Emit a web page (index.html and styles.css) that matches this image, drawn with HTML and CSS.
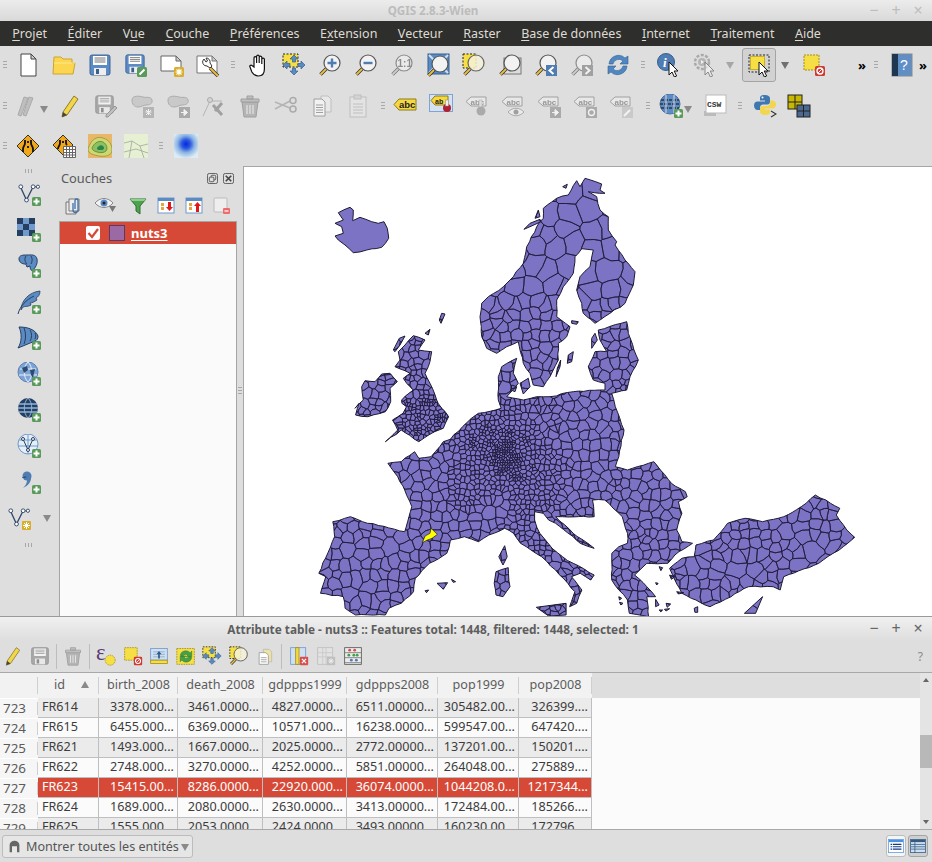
FILE: index.html
```html
<!DOCTYPE html>
<html lang="fr">
<head>
    <meta charset="UTF-8">
    <title>QGIS 2.8.3-Wien</title>
    <link rel="stylesheet" href="styles.css">
</head>
<body>
<svg class="defs" width="0" height="0">
    <defs>
        <radialGradient id="heatg" cx=".5" cy=".42" r=".6"><stop offset="0" stop-color="#0628e0"/><stop offset=".3" stop-color="#2a58e0"/><stop offset=".6" stop-color="#8cb4e4"/><stop offset="1" stop-color="#dcecf4"/></radialGradient>
        <g id="plusb"><rect x="15" y="15" width="9" height="9" rx="1.5" fill="#5a9a5a"/><path d="M19.5 16.500v6M16.500 19.500h6" stroke="#fff" stroke-width="2"/></g>
        <g id="mag"><path d="M8 16 2.500 21.500" stroke="#333" stroke-width="3.4"/><path d="M8 16 2.500 21.500" stroke="#eec040" stroke-width="1.8"/><circle cx="14" cy="10" r="8" fill="#f2f2f2" stroke="#555" stroke-width="1.2"/></g>
        <g id="tag"><path d="M6 3h15v9H6L1 7.5z" fill="#eee" stroke="#777"/><text x="5.5" y="10.5" font-size="8" font-weight="700" font-family="Liberation Sans" fill="#666">abc</text></g>
        <g id="arrow"><path d="M0 0v13l3-3 2.4 5 2.2-1-2.4-5H9z" fill="#fff" stroke="#111" stroke-width="1"/></g>
        <g id="v"><path d="M4 6l6 13L17 5" fill="none" stroke="#30486a" stroke-width="1.4"/><path d="M17 5h5" stroke="#30486a"/><circle cx="4" cy="5" r="2" fill="#fff" stroke="#30486a"/><circle cx="10" cy="19" r="2" fill="#fff" stroke="#30486a"/><circle cx="17" cy="5" r="2" fill="#fff" stroke="#30486a"/><circle cx="22" cy="5" r="1.7" fill="#fff" stroke="#30486a"/></g>
        <g id="globe"><circle cx="11" cy="10" r="10" fill="#7da4d4" stroke="#5a82b8"/><path d="M3 7h16M2 13h18M11 0c-5 5-5 15 0 20M11 0c5 5 5 15 0 20" stroke="#e8f0fa" fill="none"/><path d="M5 6l5-2 1 4-4 3zM13 8l5-1-1 4-1 5-2-3z" fill="#2d4a70"/></g>

        <symbol id="new" viewBox="0 0 24 24"><path d="M5 1h10l5 5v17H5z" fill="#fff" stroke="#444"/><path d="M15 1v5h5z" fill="#ccc" stroke="#444"/></symbol>
        <symbol id="open" viewBox="0 0 24 24"><path d="M1 21 2 4h7l2 2h9v4h3l-2 11z" fill="#fbd64e" stroke="#c9a431"/><path d="M2 10h21" stroke="#ffe98c"/></symbol>
        <symbol id="save" viewBox="0 0 24 24"><rect x="2" y="2" width="20" height="20" rx="2" fill="#5b8bc2" stroke="#3d6699"/><rect x="5" y="3" width="14" height="9" fill="#fff"/><path d="M6.5 5h11M6.5 7h11M6.500 9h11" stroke="#777"/><rect x="6" y="15" width="12" height="7" fill="#eee"/><rect x="8" y="16" width="3" height="5" fill="#3d5f8c"/></symbol>
        <symbol id="saveas" viewBox="0 0 24 24"><use href="#save" width="22" height="22"/><rect x="13" y="14" width="10" height="10" rx="1.5" fill="#5a9a5a"/><path d="M15.5 21.5l5-5" stroke="#fff" stroke-width="2"/></symbol>
        <symbol id="newprint" viewBox="0 0 24 24"><path d="M1 3h15l5 5v10H1z" fill="#fff" stroke="#666"/><path d="M16 3v5h5z" fill="#ccc" stroke="#666"/><rect x="14" y="14" width="10" height="10" rx="1.5" fill="#d9ae2a"/><path d="M19 15.5v7M15.5 19h7M16.5 16.5l5 5M21.5 16.5l-5 5" stroke="#fff" stroke-width="1.1"/></symbol>
        <symbol id="manager" viewBox="0 0 24 24"><path d="M1 3h15l5 5v12H1z" fill="#fff" stroke="#777"/><path d="M16 3v5h5z" fill="#ccc" stroke="#777"/><path d="M14 15l8 8" stroke="#333" stroke-width="3.4"/><path d="M14 15l8 8" stroke="#eec040" stroke-width="1.8"/><path d="M8 6a4 4 0 0 0 3 7l3 2 2-2-2-3a4 4 0 0 0-4-5l1.5 3-1.5 1z" fill="#fff" stroke="#333"/></symbol>
        <symbol id="pan" viewBox="0 0 24 24"><path d="M8 12V5a1.3 1.3 0 0 1 2.6 0v5-6.500a1.3 1.3 0 0 1 2.6 0V10 4.500a1.3 1.3 0 0 1 2.6 0V11 6.500a1.3 1.3 0 0 1 2.6 0V16c0 4-2 7-6 7s-5-2-6.500-4L4 14c-.8-1.2.8-2.500 2-1.500L8 14z" fill="#fff" stroke="#111" stroke-width="1.2"/></symbol>
        <symbol id="pansel" viewBox="0 0 24 24"><rect x="1" y="1" width="15" height="13" fill="#f5df45" stroke="#222" stroke-dasharray="2 1.5"/><path d="M12 2l4 4h-2.500v3h-3V6H8zM12 22l-4-4h2.500v-3h3v3H16zM1 12l4-4v2.500h3v3H5V16zM23 12l-4 4v-2.500h-3v-3h3V8z" fill="#5b8bc2" stroke="#35608f" stroke-width=".7"/></symbol>
        <symbol id="zin" viewBox="0 0 24 24"><use href="#mag"/><path d="M14 5.5v9M9.500 10h9" stroke="#4f7db3" stroke-width="2.4"/></symbol>
        <symbol id="zout" viewBox="0 0 24 24"><use href="#mag"/><path d="M9.500 10h9" stroke="#4f7db3" stroke-width="2.4"/></symbol>
        <symbol id="z11" viewBox="0 0 24 24"><use href="#mag"/><text x="7.5" y="13.500" font-size="10" font-weight="700" font-family="Liberation Sans" fill="#555">1:1</text></symbol>
        <symbol id="zfull" viewBox="0 0 24 24"><rect x="2" y="1" width="21" height="20" fill="#5b8bc2" stroke="#35608f"/><path d="M3 2l6 6M22 2l-6 6M3 20l6-6M22 20l-6-6" stroke="#cfe0f2" stroke-width="2"/><use href="#mag" transform="translate(0 1)"/></symbol>
        <symbol id="zsel" viewBox="0 0 24 24"><rect x="1" y="1" width="13" height="14" fill="#f5df45" stroke="#222" stroke-dasharray="2 1.5"/><path d="M8 16 2.500 21.500" stroke="#333" stroke-width="3.4"/><path d="M8 16 2.500 21.500" stroke="#eec040" stroke-width="1.8"/><circle cx="14" cy="10" r="8" fill="#f4f2d8" fill-opacity=".85" stroke="#666" stroke-width="1.2"/></symbol>
        <symbol id="zlast" viewBox="0 0 24 24"><rect x="6" y="5" width="17" height="16" fill="#ddd" stroke="#777"/><use href="#mag"/></symbol>
        <symbol id="zprev" viewBox="0 0 24 24"><use href="#mag"/><rect x="12" y="12" width="11" height="11" fill="#4f7db3"/><path d="M19.5 14l-4 3.500 4 3.500" fill="none" stroke="#fff" stroke-width="2"/></symbol>
        <symbol id="znext" viewBox="0 0 24 24"><use href="#mag"/><rect x="12" y="12" width="11" height="11" fill="#4f7db3"/><path d="M15.5 14l4 3.500-4 3.500" fill="none" stroke="#fff" stroke-width="2"/></symbol>
        <symbol id="refresh" viewBox="0 0 24 24"><path d="M3 11A9.500 9.500 0 0 1 19 5l3-2v8h-8l3-3a6 6 0 0 0-10 3z" fill="#4f87c2" stroke="#35608f" stroke-width=".6"/><path d="M21 13A9.500 9.500 0 0 1 5 19l-3 2v-8h8l-3 3a6 6 0 0 0 10-3z" fill="#4f87c2" stroke="#35608f" stroke-width=".6"/></symbol>
        <symbol id="identify" viewBox="0 0 24 24"><circle cx="10" cy="9" r="8.5" fill="#4f7db3" stroke="#35608f"/><text x="7" y="14" font-size="13" font-weight="700" font-style="italic" font-family="Liberation Serif" fill="#fff">i</text><use href="#arrow" transform="translate(13 9)"/></symbol>
        <symbol id="action" viewBox="0 0 24 24"><circle cx="10" cy="9" r="7" fill="#ddd" stroke="#888" stroke-width="2.5" stroke-dasharray="3 1.5"/><circle cx="10" cy="9" r="4" fill="#999"/><path d="M9 7l3 2-3 2z" fill="#fff"/><use href="#arrow" transform="translate(13 9)" opacity=".7"/></symbol>
        <symbol id="select" viewBox="0 0 24 24"><rect x="2" y="2" width="20" height="17" fill="none" stroke="#222" stroke-dasharray="2 1.5"/><rect x="3.5" y="3.5" width="14" height="13" fill="#f5df45" stroke="#c9b02c"/><use href="#arrow" transform="translate(12 9)"/></symbol>
        <symbol id="deselect" viewBox="0 0 24 24"><rect x="2" y="2" width="15" height="15" fill="#f5df45" stroke="#a58f1c" stroke-dasharray="2 1"/><rect x="13" y="13" width="10" height="10" rx="1.5" fill="#d03a32"/><circle cx="18" cy="18" r="3" fill="none" stroke="#fff" stroke-width="1.3"/><path d="M16 20l4-4" stroke="#fff"/></symbol>
        <symbol id="help" viewBox="0 0 24 24"><rect x="3" y="1" width="20" height="22" fill="#5f8fc6" stroke="#888"/><rect x="3" y="1" width="6" height="22" fill="#1f3650"/><text x="11" y="17" font-size="14" font-family="Liberation Sans" fill="#fff">?</text></symbol>

        <symbol id="pencils" viewBox="0 0 24 24"><path d="M3 21 9 3l4 1-7 18zM8 21 14 3l4 1-7 18z" fill="#aaa" stroke="#888"/></symbol>
        <symbol id="pencil" viewBox="0 0 24 24"><path d="M5 18 16 2l4 3L9 21l-5 2z" fill="#f2d64a" stroke="#8c7a30"/><path d="M4 23l1-5 4 3z" fill="#444"/></symbol>
        <symbol id="saveedit" viewBox="0 0 24 24"><use href="#save" width="21" height="21"/><path d="M12 21l9-9 2 2-9 9h-2z" fill="#aaa" stroke="#666"/></symbol>
        <symbol id="addpart" viewBox="0 0 24 24"><path d="M2 6c0-5 8-4 11-3s8-1 9 3-3 5-6 5-4 2-8 2-6-3-6-7z" fill="#bbb" stroke="#888"/><rect x="13" y="13" width="11" height="11" fill="#999"/><path d="M18.5 15v6M15.500 18h6M16 16l5 5M21 16l-5 5" stroke="#fff"/></symbol>
        <symbol id="movefeat" viewBox="0 0 24 24"><path d="M2 6c0-5 8-4 11-3s8-1 9 3-3 5-6 5-4 2-8 2-6-3-6-7z" fill="#bbb" stroke="#888"/><rect x="13" y="13" width="11" height="11" fill="#888"/><path d="M15 18.5h4M18 15.500l3.500 3-3.500 3z" fill="#fff" stroke="#fff"/></symbol>
        <symbol id="node" viewBox="0 0 24 24"><path d="M1 22 8 7h12" fill="none" stroke="#999"/><circle cx="8" cy="6" r="2.5" fill="#ccc" stroke="#888"/><path d="M11 11l9 10M20 9l-7 8" stroke="#777" stroke-width="3"/></symbol>
        <symbol id="trash" viewBox="0 0 24 24"><path d="M4 8h16l-2 15H6z" fill="#999" stroke="#777"/><path d="M3 5h18v3H3zM9 2h6v3H9z" fill="#aaa" stroke="#777"/><path d="M9 11v9M12 11v9M15 11v9" stroke="#e4e4e4" stroke-width="1.3"/></symbol>
        <symbol id="cut" viewBox="0 0 24 24"><path d="M1 8l15 6M1 15l15-8" stroke="#999" stroke-width="1.5"/><circle cx="19" cy="6.5" r="3" fill="none" stroke="#888" stroke-width="1.5"/><circle cx="19" cy="15" r="3" fill="none" stroke="#888" stroke-width="1.5"/></symbol>
        <symbol id="copy" viewBox="0 0 24 24"><path d="M11 2h7l3 3v13h-10z" fill="#eee" stroke="#aaa"/><path d="M4 5h8l3 3v14H4z" fill="#fff" stroke="#777"/><path d="M6 11h7M6 13.500h7M6 16h7M6 18.500h7" stroke="#777"/></symbol>
        <symbol id="paste" viewBox="0 0 24 24"><rect x="4" y="3" width="16" height="20" fill="#e6e6e6" stroke="#aaa"/><rect x="8" y="1" width="7" height="4" fill="#ccc" stroke="#aaa"/><path d="M7 10h10M7 13h10M7 16h10M7 19h10" stroke="#aaa"/></symbol>
        <symbol id="abc" viewBox="0 0 24 24"><path d="M6 5h17v11H6l-5-5.500z" fill="#f5d93f" stroke="#8c7a20"/><text x="6" y="13.5" font-size="9.5" font-weight="700" font-family="Liberation Sans" fill="#222">abc</text></symbol>
        <symbol id="abpin" viewBox="0 0 24 24"><rect x=".5" y=".5" width="23" height="17" fill="#d6e2f2" stroke="#7ea4d6"/><path d="M6 2h13v9H6L2 6.500z" fill="#f5d93f" stroke="#8c7a20"/><text x="6" y="9.5" font-size="7" font-weight="700" font-family="Liberation Sans" fill="#222">ab</text><circle cx="18" cy="14" r="4" fill="#b02030"/><rect x="16.5" y="6" width="3" height="6" fill="#eee" stroke="#888" stroke-width=".5"/></symbol>
        <symbol id="abdot" viewBox="0 0 24 24"><use href="#tag"/><rect x="14" y="6" width="3" height="8" fill="#ddd" stroke="#888" stroke-width=".5"/><circle cx="16" cy="17" r="4.5" fill="#888"/></symbol>
        <symbol id="abceye" viewBox="0 0 24 24"><use href="#tag"/><path d="M7 18c5-5 11-5 16 0-5 5-11 5-16 0z" fill="#f4f4f4" stroke="#888"/><circle cx="15" cy="18" r="2.5" fill="#777"/></symbol>
        <symbol id="abcmove" viewBox="0 0 24 24"><use href="#tag"/><rect x="13" y="13" width="11" height="11" fill="#888"/><path d="M15 18.5h4M18 15.500l3.500 3-3.500 3z" fill="#fff" stroke="#fff"/></symbol>
        <symbol id="abcrot" viewBox="0 0 24 24"><use href="#tag"/><rect x="13" y="13" width="11" height="11" fill="#888"/><circle cx="18.5" cy="18.5" r="3" fill="none" stroke="#fff" stroke-width="1.3"/></symbol>
        <symbol id="abcedit" viewBox="0 0 24 24"><use href="#tag"/><rect x="13" y="13" width="11" height="11" fill="#bbb"/><path d="M15 22l6-6" stroke="#fff" stroke-width="2"/></symbol>
        <symbol id="globeadd" viewBox="0 0 24 24"><circle cx="11" cy="10" r="10" fill="#5a8cc8" stroke="#4a70a8"/><path d="M2 6h18M1 10h20M2 14h18" stroke="#333" stroke-width="1.5" stroke-dasharray="3 1"/><path d="M7 1v18M15 1v18" stroke="#ccd" stroke-width="1.2"/><use href="#plusb"/></symbol>
        <symbol id="csw" viewBox="0 0 24 24"><rect x="1" y="17" width="12" height="5" fill="#bbb"/><rect x="3" y="1" width="20" height="18" fill="#fff" stroke="#bbb"/><text x="4" y="13" font-size="8" font-weight="700" font-family="Liberation Mono" fill="#333">CSW</text></symbol>
        <symbol id="python" viewBox="0 0 24 24"><path d="M12 1C8 1 7 2.500 7 4v2.500h5v1H4.500C2.500 7.500 1 9 1 11.500s1.500 4.500 3.500 4.500H7v-2.500c0-2 1.500-3 3-3h4.500c1.500 0 2.500-1 2.500-3V4c0-1.500-2-3-5-3z" fill="#3f77b0"/><path d="M12 21c4 0 5-1.500 5-3v-2.500h-5v-1h7.500c2 0 3.500-1.500 3.500-4s-1.500-4-3.500-4H17v2.500c0 2-1.500 3-3 3H9.500C8 12 7 13 7 15v3c0 1.500 2 3 5 3z" fill="#f3d64e"/><circle cx="9.5" cy="3.5" r="1" fill="#fff"/><path d="M18 17l5 3-5 3" fill="none" stroke="#333" stroke-width="1.1"/></symbol>
        <symbol id="tiles" viewBox="0 0 24 24"><rect x="1" y="1" width="14" height="14" fill="#c8b800" stroke="#222"/><path d="M8 1v14M1 8h14" stroke="#222"/><rect x="10" y="11" width="13" height="12" fill="#4a6890" stroke="#222"/><path d="M16.5 11v12M10 17h13" stroke="#222"/></symbol>

        <symbol id="sign" viewBox="0 0 24 24"><path d="M12 1l11 11-11 11L1 12z" fill="#f0a818" stroke="#333"/><path d="M9 6v3c0 3-2 3-2 6v3M15 6v3c0 3 2 3 2 6v3M12 7v2M12 12v2" stroke="#111" stroke-width="1.8" fill="none"/></symbol>
        <symbol id="signgrid" viewBox="0 0 24 24"><path d="M11 1l10 10-10 10L1 11z" fill="#f0a818" stroke="#333"/><path d="M8 6v3c0 3-2 3-2 6M14 6v3c0 1 1 2 1 2M11 7v2" stroke="#111" stroke-width="1.8" fill="none"/><path d="M11.500 12.500h12v11h-12z" fill="#fff" stroke="#666"/><path d="M14.500 12.500v11M17.500 12.500v11M20.500 12.500v11M11.500 15.500h12M11.500 18.500h12M11.500 21h12" stroke="#666"/></symbol>
        <symbol id="contour" viewBox="0 0 24 24"><rect width="24" height="24" fill="#e8b868"/><path d="M0 15C3 5 9 2 15 4s9 6 9 12-8 7-13 6-11-2-11-7z" fill="#cdd870" stroke="#8a7a30" stroke-width=".6"/><path d="M4 14c2-5 7-8 11-6s5 7 3 9-6 2-9 1-5-2-5-4z" fill="#8cc060" stroke="#4c6a2c" stroke-width=".6"/><path d="M9 14c1-2 4-4 6-2s1 4-2 4-4 0-4-2z" fill="#28844a"/></symbol>
        <symbol id="roads" viewBox="0 0 24 24"><rect width="24" height="24" fill="#e8f0d4"/><path d="M0 9l8-2 8 5 8-2M5 24l3-17M16 12l4 12M0 18l12-3 12 4" stroke="#9aa89a" stroke-width=".8" fill="none"/></symbol>
        <symbol id="heat" viewBox="0 0 24 24"><rect width="24" height="24" fill="url(#heatg)"/></symbol>

        <symbol id="addv" viewBox="0 0 24 24"><use href="#v" transform="scale(.95)"/><use href="#plusb"/></symbol>
        <symbol id="addr" viewBox="0 0 24 24"><path d="M0 0h6v6H0zM12 0h6v6h-6zM6 6h6v6H6zM0 12h6v6H0zM12 12h6v6h-6z" fill="#263f60"/><path d="M6 0h6v6H6zM0 6h6v6H0zM12 6h6v6h-6zM6 12h6v6H6z" fill="#6f9acb"/><use href="#plusb"/></symbol>
        <symbol id="addpg" viewBox="0 0 24 24"><path d="M2 5c0-4 4-4 8-4s9-1 10 4-2 9-4 11-3-2-3-4l-3 1c-1-1 0-3-2-3-3 0-6-2-6-5z" fill="#5b8bc2" stroke="#263f60"/><path d="M9 2c-2 3-1 6 1 8M14 2c2 3 1 6 0 8" stroke="#263f60" fill="none"/><use href="#plusb"/></symbol>
        <symbol id="addsl" viewBox="0 0 24 24"><path d="M4 20C4 11 12 2 23 1c0 4-2 6-4 7l1 2c-3 2-5 3-7 3l1 2c-3 2-6 1-8 2z" fill="#5b8bc2" stroke="#263f60" stroke-width=".8"/><path d="M1 24c2-8 8-14 16-18" stroke="#263f60" fill="none"/><use href="#plusb"/></symbol>
        <symbol id="addwcs" viewBox="0 0 24 24"><path d="M2 1c8 0 16 2 19 9 0 3-1 4-3 5L1 22c4-6 4-15 1-21z" fill="#5b8bc2" stroke="#263f60"/><path d="M7 2c2 5 2 11 0 16M13 4c2 3 2 8 0 11M18 7c1 2 1 4 0 6" stroke="#263f60" fill="none"/><use href="#plusb"/></symbol>
        <symbol id="addwms" viewBox="0 0 24 24"><use href="#globe"/><use href="#plusb"/></symbol>
        <symbol id="addwfs" viewBox="0 0 24 24"><circle cx="11" cy="10" r="10" fill="#263f60"/><path d="M2 6h18M1 10h20M2 14h18" stroke="#8fb4dc" stroke-width="1.5"/><path d="M11 0c-5 5-5 15 0 20M11 0c5 5 5 15 0 20" stroke="#8fb4dc" fill="none"/><use href="#plusb"/></symbol>
        <symbol id="addvl" viewBox="0 0 24 24"><circle cx="11" cy="10" r="10" fill="#e6eef8" stroke="#6f9acb"/><path d="M2 6h18M1 12h20M11 0v20" stroke="#6f9acb"/><path d="M6 5l5 11 5-11" fill="none" stroke="#263f60"/><circle cx="6" cy="5" r="1.5" fill="#fff" stroke="#263f60"/><circle cx="11" cy="16" r="1.5" fill="#fff" stroke="#263f60"/><circle cx="16" cy="5" r="1.5" fill="#fff" stroke="#263f60"/><use href="#plusb"/></symbol>
        <symbol id="addtxt" viewBox="0 0 24 24"><circle cx="10" cy="6" r="4.5" fill="#4f7db3"/><path d="M14 6c1 5-3 10-8 12 3-3 4-5 4-8z" fill="#4f7db3"/><path d="M5 8c1-1 3-2 5-1" stroke="#4f7db3"/><use href="#plusb"/></symbol>
        <symbol id="newv" viewBox="0 0 24 24"><use href="#v" transform="scale(.95)"/><rect x="15" y="15" width="9" height="9" rx="1" fill="#d9ae2a"/><path d="M19.5 16v7M16 19.500h7M17 17l5 5M22 17l-5 5" stroke="#fff"/></symbol>

        <symbol id="float" viewBox="0 0 12 12"><rect x=".5" y=".5" width="11" height="11" rx="2" fill="none" stroke="#555"/><rect x="4.5" y="2.5" width="5" height="5" rx="1" fill="none" stroke="#555"/><rect x="2.5" y="4.5" width="5" height="5" rx="1" fill="#dedede" stroke="#555"/></symbol>
        <symbol id="close" viewBox="0 0 12 12"><rect x=".5" y=".5" width="11" height="11" rx="2" fill="none" stroke="#555"/><path d="M3 3l6 6M9 3l-6 6" stroke="#444" stroke-width="1.8"/></symbol>
        <symbol id="addgroup" viewBox="0 0 18 18"><path d="M1 5h10v12H1z" fill="#e8e8e8" stroke="#777"/><path d="M4 2h10v12H4z" fill="#eee" stroke="#777"/><path d="M10 12V3.500a1.500 1.500 0 0 1 3 0V13a2.500 2.500 0 0 1-5 0V6" fill="none" stroke="#3d6fa8" stroke-width="1.3"/></symbol>
        <symbol id="eye" viewBox="0 0 24 18"><path d="M1 6c5-6 13-6 18 0-5 6-13 6-18 0z" fill="#f2f2f2" stroke="#888"/><circle cx="10" cy="6" r="3.5" fill="#5b8bc2"/><circle cx="10" cy="6" r="1.5" fill="#223"/><path d="M15 9h7l-3.500 6z" fill="#777"/></symbol>
        <symbol id="funnel" viewBox="0 0 18 18"><path d="M1 2h16L11 9v8l-4-3V9z" fill="#4da34d" stroke="#2f6f2f"/><path d="M1 2h16l-2 2H3z" fill="#8dd08d"/></symbol>
        <symbol id="expand" viewBox="0 0 18 18"><rect x="1" y="1" width="16" height="15" fill="#fff" stroke="#6f9acb"/><rect x="1" y="1" width="16" height="3" fill="#5b8bc2"/><path d="M4 6h3v3H4zM4 10h3v3H4z" fill="#e8a33c"/><path d="M11 5h3v5h2l-3.500 4L9 10h2z" fill="#e01818"/></symbol>
        <symbol id="collapse" viewBox="0 0 18 18"><rect x="1" y="1" width="16" height="15" fill="#fff" stroke="#6f9acb"/><rect x="1" y="1" width="16" height="3" fill="#5b8bc2"/><path d="M4 6h3v3H4zM4 10h3v3H4z" fill="#e8a33c"/><path d="M11 15h3V9h2l-3.500-4L9 9h2z" fill="#e01818"/></symbol>
        <symbol id="rmlayer" viewBox="0 0 18 18"><rect x="1" y="1" width="13" height="14" rx="1" fill="#eee" stroke="#bbb"/><rect x="10" y="11" width="7" height="6" rx="1" fill="#ef6a6a"/><path d="M11.500 14h4" stroke="#fff" stroke-width="1.3"/></symbol>

        <symbol id="expr" viewBox="0 0 24 24"><text x="0" y="17" font-size="27" font-family="Liberation Serif" fill="#5a3a78">&#949;</text><circle cx="17" cy="17" r="6" fill="#f5df45" stroke="#a58f1c" stroke-dasharray="1.5 1"/></symbol>
        <symbol id="movetop" viewBox="0 0 24 24"><rect x="2" y="3" width="20" height="14" fill="#cfe0f2" stroke="#6f9acb"/><path d="M5 7h14M5 10h14M5 13h14" stroke="#8aa7c8"/><path d="M9 10l3-4 3 4h-2v5h-2v-5z" fill="#2c5a8c"/><rect x="2" y="17" width="20" height="4" fill="#f5df45" stroke="#a58f1c"/></symbol>
        <symbol id="invert" viewBox="0 0 24 24"><rect x="1" y="3" width="21" height="19" fill="#f5df45" stroke="#a58f1c" stroke-dasharray="2 1"/><path d="M5 11a7 7 0 0 1 12-3l2-2v7h-7l2-2a4 4 0 0 0-6 2zM19 14a7 7 0 0 1-12 3l-2 2v-7h7l-2 2a4 4 0 0 0 6-2z" fill="#45a048" stroke="#2f6f2f" stroke-width=".5"/></symbol>
        <symbol id="copysm" viewBox="0 0 24 24"><path d="M10 4h7l3 3v12h-10z" fill="#eee2a0" stroke="#bbb"/><path d="M5 8h8l3 3v11H5z" fill="#fff" stroke="#999"/><path d="M7 14h7M7 16.500h7M7 19h7" stroke="#999"/></symbol>
        <symbol id="delcol" viewBox="0 0 24 24"><rect x="2" y="2" width="18" height="20" fill="#cfe0f2" stroke="#6f9acb"/><rect x="8" y="2" width="4" height="20" fill="#f5d93f" stroke="#a58f1c"/><rect x="13" y="13" width="10" height="10" rx="1" fill="#d65050"/><path d="M15.500 15.500l5 5M20.500 15.500l-5 5" stroke="#fff" stroke-width="1.5"/></symbol>
        <symbol id="newcol" viewBox="0 0 24 24"><rect x="2" y="2" width="18" height="20" fill="#e4e4e4" stroke="#aaa"/><path d="M8 2v20M12 2v20M2 8h18M2 13h18" stroke="#bbb"/><rect x="13" y="13" width="10" height="10" fill="#aaa"/><path d="M18 14.500v7M14.500 18h7M15.500 15.500l5 5M20.500 15.500l-5 5" stroke="#fff"/></symbol>
        <symbol id="calc" viewBox="0 0 24 24"><rect x="2" y="2" width="20" height="20" fill="#ececec" stroke="#555"/><path d="M2 8h20M2 14h20M2 20h20" stroke="#777"/><circle cx="8" cy="5" r="1.7" fill="#d65050"/><circle cx="14" cy="5" r="1.7" fill="#d65050"/><circle cx="7" cy="11" r="1.7" fill="#45a048"/><circle cx="13" cy="11" r="1.7" fill="#45a048"/><circle cx="17" cy="11" r="1.7" fill="#45a048"/><circle cx="10" cy="17" r="1.7" fill="#4f7db3"/><circle cx="16" cy="17" r="1.7" fill="#4f7db3"/></symbol>

        <symbol id="filter" viewBox="0 0 16 16"><path d="M2 15V6a6 5 0 0 1 12 0v9h-3V8H5v7z" fill="#666"/><path d="M5 8h6v7H5z" fill="#e8e8e8"/></symbol>
        <symbol id="formview" viewBox="0 0 20 18"><rect x=".5" y=".5" width="19" height="17" fill="#fff" stroke="#5b9be0"/><rect x="1" y="1" width="18" height="3" fill="#4a90e2"/><path d="M3 7h2M3 10h2M3 13h2M6 7h11M6 10h11M6 13h11" stroke="#123a80" stroke-width="1.5"/></symbol>
        <symbol id="tableview" viewBox="0 0 20 18"><rect x=".5" y=".5" width="19" height="17" fill="#cfe0f2" stroke="#345a80"/><rect x="1" y="1" width="18" height="3" fill="#345a80"/><path d="M1 7h18M1 10h18M1 13h18M6 4v14" stroke="#345a80"/></symbol>
    </defs>
</svg>

<div class="app">
    <div class="titlebar">
        <span class="title-text">QGIS 2.8.3-Wien</span>
        <div class="win-btns"><span>&#8722;</span><span>+</span><span>&#215;</span></div>
    </div>
    <div class="menubar">
        <span><u>P</u>rojet</span>
        <span><u>É</u>diter</span>
        <span>V<u>u</u>e</span>
        <span><u>C</u>ouche</span>
        <span><u>P</u>références</span>
        <span>E<u>x</u>tension</span>
        <span><u>V</u>ecteur</span>
        <span><u>R</u>aster</span>
        <span><u>B</u>ase de données</span>
        <span><u>I</u>nternet</span>
        <span><u>T</u>raitement</span>
        <span><u>A</u>ide</span>
    </div>

    <div class="toolbar row1">
        <i class="grip"></i>
        <span class="slot"><svg class="ic"><use href="#new"/></svg></span>
        <span class="slot"><svg class="ic"><use href="#open"/></svg></span>
        <span class="slot"><svg class="ic"><use href="#save"/></svg></span>
        <span class="slot"><svg class="ic"><use href="#saveas"/></svg></span>
        <span class="slot"><svg class="ic"><use href="#newprint"/></svg></span>
        <span class="slot"><svg class="ic"><use href="#manager"/></svg></span>
        <i class="grip wide"></i>
        <span class="slot"><svg class="ic"><use href="#pan"/></svg></span>
        <span class="slot"><svg class="ic"><use href="#pansel"/></svg></span>
        <span class="slot"><svg class="ic"><use href="#zin"/></svg></span>
        <span class="slot"><svg class="ic"><use href="#zout"/></svg></span>
        <span class="slot off"><svg class="ic"><use href="#z11"/></svg></span>
        <span class="slot"><svg class="ic"><use href="#zfull"/></svg></span>
        <span class="slot"><svg class="ic"><use href="#zsel"/></svg></span>
        <span class="slot"><svg class="ic"><use href="#zlast"/></svg></span>
        <span class="slot"><svg class="ic"><use href="#zprev"/></svg></span>
        <span class="slot off"><svg class="ic"><use href="#znext"/></svg></span>
        <span class="slot"><svg class="ic"><use href="#refresh"/></svg></span>
        <i class="grip wide"></i>
        <span class="slot"><svg class="ic"><use href="#identify"/></svg></span>
        <span class="slot off"><svg class="ic"><use href="#action"/></svg></span>
        <i class="drop gap-left"></i>
        <span class="slot pressed"><svg class="ic"><use href="#select"/></svg></span>
        <i class="drop dark"></i>
        <span class="slot deselect"><svg class="ic"><use href="#deselect"/></svg></span>
        <b class="more more-a">»</b>
        <i class="grip wide"></i>
        <span class="slot"><svg class="ic"><use href="#help"/></svg></span>
        <b class="more more-b">»</b>
    </div>

    <div class="toolbar row2">
        <i class="grip"></i>
        <span class="slot with-drop off"><svg class="ic"><use href="#pencils"/></svg><i class="drop"></i></span>
        <span class="slot"><svg class="ic"><use href="#pencil"/></svg></span>
        <span class="slot off"><svg class="ic"><use href="#saveedit"/></svg></span>
        <span class="slot off"><svg class="ic"><use href="#addpart"/></svg></span>
        <span class="slot off"><svg class="ic"><use href="#movefeat"/></svg></span>
        <span class="slot off"><svg class="ic"><use href="#node"/></svg></span>
        <span class="slot off"><svg class="ic"><use href="#trash"/></svg></span>
        <span class="slot off"><svg class="ic"><use href="#cut"/></svg></span>
        <span class="slot off"><svg class="ic"><use href="#copy"/></svg></span>
        <span class="slot off"><svg class="ic"><use href="#paste"/></svg></span>
        <i class="grip narrow"></i>
        <span class="slot"><svg class="ic"><use href="#abc"/></svg></span>
        <span class="slot"><svg class="ic"><use href="#abpin"/></svg></span>
        <span class="slot off"><svg class="ic"><use href="#abdot"/></svg></span>
        <span class="slot off"><svg class="ic"><use href="#abceye"/></svg></span>
        <span class="slot off"><svg class="ic"><use href="#abcmove"/></svg></span>
        <span class="slot off"><svg class="ic"><use href="#abcrot"/></svg></span>
        <span class="slot off"><svg class="ic"><use href="#abcedit"/></svg></span>
        <i class="grip wider"></i>
        <span class="slot with-drop globe-slot"><svg class="ic"><use href="#globeadd"/></svg><i class="drop"></i></span>
        <span class="slot"><svg class="ic"><use href="#csw"/></svg></span>
        <i class="grip wide"></i>
        <span class="slot"><svg class="ic"><use href="#python"/></svg></span>
        <span class="slot tiles-slot"><svg class="ic"><use href="#tiles"/></svg></span>
    </div>

    <div class="toolbar row3">
        <i class="grip"></i>
        <span class="slot"><svg class="ic"><use href="#sign"/></svg></span>
        <span class="slot"><svg class="ic"><use href="#signgrid"/></svg></span>
        <span class="slot"><svg class="ic"><use href="#contour"/></svg></span>
        <span class="slot"><svg class="ic"><use href="#roads"/></svg></span>
        <i class="grip wide"></i>
        <span class="slot"><svg class="ic"><use href="#heat"/></svg></span>
    </div>

    <div class="main">
        <div class="side-tools">
            <i class="grip-h"></i>
            <span class="vslot"><svg class="ic"><use href="#addv"/></svg></span>
            <span class="vslot"><svg class="ic"><use href="#addr"/></svg></span>
            <span class="vslot"><svg class="ic"><use href="#addpg"/></svg></span>
            <span class="vslot"><svg class="ic"><use href="#addsl"/></svg></span>
            <span class="vslot"><svg class="ic"><use href="#addwcs"/></svg></span>
            <span class="vslot"><svg class="ic"><use href="#addwms"/></svg></span>
            <span class="vslot"><svg class="ic"><use href="#addwfs"/></svg></span>
            <span class="vslot"><svg class="ic"><use href="#addvl"/></svg></span>
            <span class="vslot"><svg class="ic"><use href="#addtxt"/></svg></span>
            <span class="vslot last"><svg class="ic"><use href="#newv"/></svg><i class="drop"></i></span>
            <i class="grip-h bottom"></i>
        </div>

        <div class="dock">
            <div class="dock-title">
                <span>Couches</span>
                <div class="dock-btns">
                    <svg class="ic12"><use href="#float"/></svg>
                    <svg class="ic12"><use href="#close"/></svg>
                </div>
            </div>
            <div class="dock-tools">
                <svg class="ic18 t-group"><use href="#addgroup"/></svg>
                <svg class="ic-eye t-eye"><use href="#eye"/></svg>
                <svg class="ic18 t-funnel"><use href="#funnel"/></svg>
                <svg class="ic18 t-expand"><use href="#expand"/></svg>
                <svg class="ic18 t-collapse"><use href="#collapse"/></svg>
                <svg class="ic18 t-remove"><use href="#rmlayer"/></svg>
            </div>
            <div class="layer-list">
                <div class="layer-row">
                    <span class="check">
                        <svg width="14" height="14" viewBox="0 0 14 14"><path d="M2.5 7l3.5 4 6-8" fill="none" stroke="#d64937" stroke-width="2.2"/></svg>
                    </span>
                    <span class="swatch"></span>
                    <span class="layer-name">nuts3</span>
                </div>
            </div>
        </div>

        <div class="splitter"><i></i></div>

        <div class="map">
            <svg class="map-svg" viewBox="244 167 688 449" width="688" height="449">
                <defs><clipPath id="land"><path id="land-clip"/></clipPath></defs>
                <path id="land-fill" class="land"/>
                <path id="regions" class="regions" clip-path="url(#land)"/>
                <path id="land-edge" class="coast"/>
                <path id="selected" class="picked"/>
            </svg>
        </div>
    </div>

    <div class="attr-window">
        <div class="attr-title">
            <span>Attribute table - nuts3 :: Features total: 1448, filtered: 1448, selected: 1</span>
            <div class="attr-btns"><span>&#8722;</span><span>+</span><span>&#215;</span></div>
        </div>
        <div class="attr-tools">
            <svg class="ic20 a1"><use href="#pencil"/></svg>
            <svg class="ic20 a2 off"><use href="#save"/></svg>
            <i class="sep s1"></i>
            <svg class="ic20 a3 off"><use href="#trash"/></svg>
            <i class="sep s2"></i>
            <svg class="ic20 a4"><use href="#expr"/></svg>
            <svg class="ic20 a5"><use href="#deselect"/></svg>
            <svg class="ic20 a5"><use href="#movetop"/></svg>
            <svg class="ic20 a5"><use href="#invert"/></svg>
            <svg class="ic20 a5"><use href="#pansel"/></svg>
            <svg class="ic20 a5"><use href="#zsel"/></svg>
            <svg class="ic20 a5"><use href="#copysm"/></svg>
            <i class="sep s3"></i>
            <svg class="ic20 a6"><use href="#delcol"/></svg>
            <svg class="ic20 a6 off"><use href="#newcol"/></svg>
            <svg class="ic20 a6"><use href="#calc"/></svg>
            <span class="attr-help">?</span>
        </div>
        <div class="table-area">
            <div class="table-view">
                <table class="attr-table">
                    <colgroup>
                        <col class="c-head"><col class="c-id"><col class="c-birth"><col class="c-death"><col class="c-g99"><col class="c-g08"><col class="c-p99"><col class="c-p08">
                    </colgroup>
                    <thead>
                        <tr>
                            <th></th>
                            <th><div class="id-head"><span>id</span><i class="sort"></i></div></th>
                            <th>birth_2008</th>
                            <th>death_2008</th>
                            <th>gdppps1999</th>
                            <th>gdppps2008</th>
                            <th>pop1999</th>
                            <th>pop2008</th>
                        </tr>
                    </thead>
                    <tbody>
                        <tr class="alt"><th>723</th><td class="key">FR614</td><td>3378.000...</td><td>3461.0000...</td><td>4827.0000...</td><td>6511.00000...</td><td>305482.00...</td><td>326399....</td></tr>
                        <tr><th>724</th><td class="key">FR615</td><td>6455.000...</td><td>6369.0000...</td><td>10571.000...</td><td>16238.0000...</td><td>599547.00...</td><td>647420....</td></tr>
                        <tr class="alt"><th>725</th><td class="key">FR621</td><td>1493.000...</td><td>1667.0000...</td><td>2025.0000...</td><td>2772.00000...</td><td>137201.00...</td><td>150201....</td></tr>
                        <tr><th>726</th><td class="key">FR622</td><td>2748.000...</td><td>3270.0000...</td><td>4252.0000...</td><td>5851.00000...</td><td>264048.00...</td><td>275889....</td></tr>
                        <tr class="sel"><th>727</th><td class="key">FR623</td><td>15415.00...</td><td>8286.0000...</td><td>22920.000...</td><td>36074.0000...</td><td>1044208.0...</td><td>1217344...</td></tr>
                        <tr><th>728</th><td class="key">FR624</td><td>1689.000...</td><td>2080.0000...</td><td>2630.0000...</td><td>3413.00000...</td><td>172484.00...</td><td>185266....</td></tr>
                        <tr class="alt"><th>729</th><td class="key">FR625</td><td>1555.000...</td><td>2053.0000...</td><td>2424.0000...</td><td>3493.00000...</td><td>160230.00...</td><td>172796....</td></tr>
                    </tbody>
                </table>
            </div>
            <div class="scrollbar">
                <i class="sb-up"></i>
                <i class="sb-thumb"></i>
                <i class="sb-down"></i>
            </div>
        </div>
        <div class="attr-bottom">
            <button class="filter-btn">
                <svg class="ic14"><use href="#filter"/></svg>
                <span>Montrer toutes les entités</span>
                <i class="drop"></i>
            </button>
            <div class="view-btns">
                <span class="view-btn on"><svg width="20" height="18"><use href="#formview"/></svg></span>
                <span class="view-btn pushed"><svg width="20" height="18"><use href="#tableview"/></svg></span>
            </div>
        </div>
    </div>
</div>
<script src="map.js"></script>
</body>
</html>
```
FILE: styles.css
```css
* {
    margin: 0;
    padding: 0;
    box-sizing: border-box;
}

body {
    width: 932px;
    height: 862px;
    overflow: hidden;
    font-family: "Noto Sans", "Open Sans", sans-serif;
    font-size: 13px;
    color: #3c3c3c;
    background-color: #dedede;
}

i {
    display: block;
}

.defs {
    position: absolute;
}

.app {
    display: flex;
    flex-direction: column;
    height: 862px;
}

/* title + menu */
.titlebar {
    height: 21px;
    background: linear-gradient(#ececec, #d9d9d9);
    display: flex;
    align-items: center;
    justify-content: center;
    padding-right: 66px;
    position: relative;
}

.title-text {
    font-size: 11.6px;
    font-weight: bold;
    color: #bcbcbc;
}

.win-btns {
    position: absolute;
    right: 7px;
    top: 0;
    display: flex;
    gap: 8px;
    color: #bdbdbd;
    font-size: 16px;
    line-height: 20px;
}

.win-btns span {
    width: 14px;
    text-align: center;
}

.menubar {
    height: 25px;
    background-color: #2e2e2c;
    color: #dfdbd2;
    display: flex;
    align-items: center;
    padding-left: 2px;
    font-size: 12.5px;
}

.menubar span {
    padding: 0 10.25px;
    white-space: nowrap;
}

.menubar u {
    text-underline-offset: 2px;
    text-decoration-skip-ink: none;
}

/* toolbars */
.toolbar {
    display: flex;
    align-items: center;
    background-color: #dedede;
}

.row1 {
    height: 38px;
}

.row2 {
    height: 44px;
}

.row3 {
    height: 38px;
    padding-bottom: 2px;
}

.slot {
    flex: none;
    width: 36px;
    height: 36px;
    display: flex;
    align-items: center;
    justify-content: center;
}

.ic {
    width: 24px;
    height: 24px;
    display: block;
}

.off svg,
svg.off {
    filter: grayscale(1) opacity(.6);
}

.grip {
    flex: none;
    width: 10px;
    height: 9px;
    background: repeating-linear-gradient(#a8a8a8 0 1px, transparent 1px 3px) 3px 0 / 4px 9px no-repeat;
}

.grip.wide {
    width: 14px;
    background-position: 5px 0;
}

.grip.narrow {
    width: 11px;
    background-position: 5px 0;
}

.grip.wider {
    width: 16px;
    background-position: 7px 0;
}

.drop {
    flex: none;
    width: 0;
    height: 0;
    border-left: 4px solid transparent;
    border-right: 4px solid transparent;
    border-top: 7px solid #8a8a8a;
}

.drop.dark {
    border-top-color: #707070;
    margin: 0 4px;
}

.drop.gap-left {
    margin: 0 7px 0 4px;
    border-top-color: #a6a6a6;
}

.pressed {
    width: 34px;
    height: 34px;
    margin: 0 1px;
    background-color: #d2d2d2;
    border: 1px solid #a4a4a4;
    border-radius: 3px;
}

.deselect {
    margin-left: 3px;
}

.more {
    flex: none;
    width: 14px;
    text-align: center;
    font-size: 13px;
    color: #000;
}

.more-a {
    margin-left: 23px;
}

.more-b {
    margin-left: -3px;
}

.with-drop {
    width: 42px;
    justify-content: flex-start;
    padding-left: 5px;
    gap: 1px;
}

.with-drop .drop {
    margin-top: 6px;
}

.globe-slot {
    padding-left: 4px;
}

.tiles-slot {
    margin-left: -2px;
}

/* main area */
.main {
    height: 450px;
    display: flex;
}

.side-tools {
    width: 59px;
    flex: none;
    display: flex;
    flex-direction: column;
    align-items: center;
    padding-right: 1px;
}

.grip-h {
    width: 9px;
    height: 4px;
    margin: 3px 0 3px;
    background: repeating-linear-gradient(90deg, #a8a8a8 0 1px, transparent 1px 3px);
}

.grip-h.bottom {
    margin-top: 7px;
}

.vslot {
    width: 58px;
    height: 36px;
    display: flex;
    align-items: center;
    justify-content: center;
}

.vslot.last {
    justify-content: flex-start;
    padding-left: 7px;
    gap: 12px;
}

.dock {
    width: 178px;
    flex: none;
    display: flex;
    flex-direction: column;
}

.dock-title {
    height: 24px;
    display: flex;
    align-items: center;
    justify-content: space-between;
    padding: 0 3px 0 2px;
    color: #5a5a5a;
    font-size: 12.8px;
}

.dock-btns {
    display: flex;
    gap: 5px;
}

.ic12 {
    width: 11px;
    height: 11px;
    display: block;
}

.dock-tools {
    height: 31px;
    display: flex;
    align-items: center;
    padding-left: 6px;
}

.ic18 {
    width: 18px;
    height: 18px;
    display: block;
}

.ic-eye {
    width: 24px;
    height: 18px;
    display: block;
}

.t-eye {
    margin-left: 11px;
}

.t-funnel {
    margin-left: 11px;
}

.t-expand {
    margin-left: 10px;
}

.t-collapse {
    margin-left: 10px;
}

.t-remove {
    margin-left: 10px;
}

.layer-list {
    flex: 1;
    background-color: #fafafa;
    border: 1px solid #a6a6a6;
    border-bottom: none;
}

.layer-row {
    height: 22px;
    background-color: #d64937;
    display: flex;
    align-items: center;
    padding-left: 26px;
}

.check {
    width: 14px;
    height: 14px;
    background-color: #fff;
    border-radius: 2px;
    display: block;
}

.check svg {
    display: block;
}

.swatch {
    width: 16px;
    height: 16px;
    margin-left: 9px;
    background-color: #9b6aa5;
    border: 1px solid #553a6a;
}

.layer-name {
    margin-left: 6px;
    color: #fff;
    font-weight: bold;
    text-decoration: underline;
    text-underline-offset: 2px;
}

.splitter {
    width: 6px;
    flex: none;
    display: flex;
    align-items: center;
    justify-content: center;
}

.splitter i {
    width: 4px;
    height: 8px;
    background: repeating-linear-gradient(#a8a8a8 0 1px, transparent 1px 3px);
}

.map {
    flex: 1;
    background-color: #fff;
    border-top: 1px solid #a6a6a6;
    border-left: 1px solid #a6a6a6;
    overflow: hidden;
}

.map-svg {
    display: block;
}

.land {
    fill: #7d73c5;
}

.regions {
    fill: none;
    stroke: #201c3a;
    stroke-width: .8;
}

.coast {
    fill: none;
    stroke: #1e1b34;
    stroke-width: 1;
}

.picked {
    fill: #ffff00;
    stroke: #222;
    stroke-width: .7;
}

/* attribute table window */
.attr-window {
    height: 246px;
    flex: none;
    display: flex;
    flex-direction: column;
    border-top: 1px solid #9a9a9a;
    position: relative;
}

.attr-title {
    height: 23px;
    background: linear-gradient(#f0f0f0, #dedede);
    display: flex;
    align-items: center;
    justify-content: center;
    padding-right: 66px;
    font-size: 11.8px;
    font-weight: bold;
    color: #5e5e5e;
}

.attr-btns {
    position: absolute;
    right: 7px;
    top: 1px;
    display: flex;
    gap: 8px;
    font-size: 16px;
    font-weight: normal;
    line-height: 20px;
    color: #666;
}

.attr-btns span {
    width: 14px;
    text-align: center;
}

.attr-tools {
    height: 32px;
    display: flex;
    align-items: center;
    padding-left: 3px;
    position: relative;
}

.ic20 {
    width: 20px;
    height: 20px;
    display: block;
    flex: none;
}

.a2 {
    margin-left: 7px;
}

.a3,
.a4 {
    margin-left: 6px;
}

.a5 {
    margin-left: 6.5px;
}

.a6 {
    margin-left: 7px;
}

.sep {
    width: 1px;
    height: 25px;
    background-color: #bdbdbd;
    margin-left: 6px;
    flex: none;
}

.attr-help {
    margin-left: auto;
    margin-right: 9px;
    color: #8a8a8a;
    font-size: 12px;
}

.table-area {
    height: 158px;
    display: flex;
    border-top: 1px solid #a8a8a8;
    border-bottom: 1px solid #a8a8a8;
}

.table-view {
    flex: 1;
    overflow: hidden;
    background: linear-gradient(#dedede 25px, #fbfbfb 25px);
}

.attr-table {
    width: 592px;
    table-layout: fixed;
    border-collapse: separate;
    border-spacing: 0;
    font-size: 12.6px;
    line-height: 16px;
}

.c-head { width: 38px; }
.c-id { width: 61px; }
.c-birth { width: 79px; }
.c-death { width: 85px; }
.c-g99 { width: 84px; }
.c-g08 { width: 91px; }
.c-p99 { width: 81px; }
.c-p08 { width: 73px; }

.attr-table thead th {
    height: 25px;
    padding-bottom: 2px;
    font-weight: normal;
    color: #5c5c5c;
    background: #f2f2f2 linear-gradient(#cfcfcf, #cfcfcf) right center / 1px 17px no-repeat;
    text-align: center;
    white-space: nowrap;
    overflow: hidden;
}

.id-head {
    display: flex;
    align-items: center;
    justify-content: space-between;
    padding: 0 10px 0 16px;
}

.sort {
    width: 0;
    height: 0;
    border-left: 4px solid transparent;
    border-right: 4px solid transparent;
    border-bottom: 7px solid #8a8a8a;
}

.attr-table tbody th {
    height: 20px;
    padding: 0 0 1px 3px;
    font-size: 13.4px;
    font-weight: normal;
    text-align: left;
    color: #5c5c5c;
    background: #f6f6f6 linear-gradient(#cfcfcf, #cfcfcf) right center / 1px 13px no-repeat;
    border-top: 1px solid #fff;
}

.attr-table td {
    height: 20px;
    padding: 0 3px 2px 4px;
    text-align: right;
    white-space: nowrap;
    overflow: hidden;
    background-color: #fbfbfb;
    border-right: 1px solid #bfbfbf;
    border-bottom: 1px solid #bfbfbf;
}

.attr-table td.key {
    text-align: left;
}

.alt td {
    background-color: #ebebeb;
}

.sel td {
    background-color: #d64937;
    color: #fff;
}

.scrollbar {
    width: 12px;
    flex: none;
    background-color: #e4e4e4;
    position: relative;
}

.sb-up,
.sb-down {
    position: absolute;
    left: 3px;
    width: 0;
    height: 0;
    border-left: 3px solid transparent;
    border-right: 3px solid transparent;
}

.sb-up {
    top: 5px;
    border-bottom: 4px solid #666;
}

.sb-down {
    bottom: 5px;
    border-top: 4px solid #666;
}

.sb-thumb {
    position: absolute;
    left: 0;
    top: 62px;
    width: 12px;
    height: 33px;
    background-color: #b8b8b8;
}

.attr-bottom {
    flex: 1;
    display: flex;
    align-items: center;
    justify-content: space-between;
    padding: 0 4px 0 2px;
}

.filter-btn {
    width: 191px;
    height: 23px;
    display: flex;
    align-items: center;
    padding: 0 3px 0 5px;
    background-color: #e6e6e6;
    border: 1px solid #bcbcbc;
    border-radius: 3px;
    font-family: inherit;
    font-size: 12.6px;
    color: #555;
}

.ic14 {
    width: 13px;
    height: 13px;
    display: block;
    margin-right: 5px;
}

.filter-btn span {
    white-space: nowrap;
}

.filter-btn .drop {
    margin: 3px 0 0 auto;
}

.view-btns {
    display: flex;
    gap: 2px;
}

.view-btn {
    width: 20px;
    height: 22px;
    display: flex;
    align-items: center;
    justify-content: center;
    border: 1px solid #bcbcbc;
    border-radius: 3px;
}

.view-btn svg {
    width: 16px;
    height: 14px;
}

.view-btn.on {
    background-color: #f5f5f5;
}

.view-btn.pushed {
    background-color: #cfcfcf;
    border-color: #a4a4a4;
}
```
FILE: map.js
```js
// nuts3 map: coast traced by hand, region borders from a voronoi over seeds of varying density
function N(list) {
    return list.map(p => [310 + p[0] / 3, 170 + p[1] / 3]);
}

function S(list) {
    return list.map(p => [310 + p[0] / 2.85, 400 + p[1] / 3]);
}

const continent = [].concat(
    S([[222,190],[260,185],[298,155],[310,175],[345,170],[380,125],[400,118],[460,55],[480,40],[545,25]]),
    N([[565,690],[565,620],[575,590],[620,565],[610,610],[625,640],[590,680],[640,690],[680,680],[720,680],[790,665],[885,660],[885,640],[850,630],[835,590],[855,545],[890,545],[870,510],[865,480],[950,455],[955,490],[985,570],[960,620],[950,660],[905,670]]),
    S([[870,20],[895,90],[880,170],[870,200],[905,210],[980,185],[1030,250],[1070,275],[1075,290],[1050,305],[1060,340],[1045,390],[1060,425],[1090,430],[1040,465],[1020,490],[960,490],[940,510],[925,525],[960,560],[985,590],[960,590],[965,650],[910,640],[905,600],[880,570],[860,540],[860,460],[880,440],[905,430],[905,400],[890,350],[840,300],[805,300],[810,350],[720,350],[700,350],[750,400],[810,445],[770,430],[700,370],[680,360],[665,340],[640,335],[640,360],[655,400],[690,445],[720,470],[750,490],[810,525],[800,540],[770,520],[745,530],[775,570],[760,610],[740,620],[755,575],[735,550],[700,510],[660,470],[600,430],[580,400],[555,385],[510,405],[480,425],[440,410],[400,420],[390,460],[340,490],[300,535],[295,575],[260,610],[225,625],[215,645],[130,645],[100,625],[95,590],[30,580],[45,530],[25,520],[70,410],[65,365],[115,350],[150,365],[270,395],[290,320],[270,270],[250,230]])
);

const britain = [].concat(
    N([[285,525],[310,497],[345,510],[325,540],[365,545],[355,590],[345,610],[360,640],[380,690]]),
    S([[365,10],[395,50],[380,85],[355,95],[310,125],[260,90],[215,125],[250,90],[235,60],[265,40],[275,20],[262,10]]),
    N([[275,690],[310,660],[290,640],[280,625],[300,610],[255,590],[270,570],[265,545]])
);

const ireland = [].concat(
    N([[135,715],[160,690],[155,650],[165,632],[195,635],[215,612],[240,610],[262,635],[240,655]]),
    S([[230,5],[215,35],[165,50],[130,45],[140,10]])
);

// one region only, so it stays out of the border clip
const iceland = N([[85,128],[120,112],[130,120],[128,152],[150,142],[185,155],[205,160],[222,155],[232,175],[236,205],[215,232],[170,240],[130,248],[105,225],[85,210],[75,198],[100,190],[95,170],[75,160],[100,150]]);

const land = [
    continent, britain, ireland,
    // norway, sweden, finland
    N([[700,115],[740,85],[775,75],[800,32],[810,50],[825,25],[875,42],[870,60],[885,70],[835,65],[860,80],[870,120],[895,140],[895,180],[920,215],[915,225],[945,270],[975,305],[970,345],[945,400],[900,430],[855,460],[820,430],[815,400],[800,360],[810,320],[840,290],[850,240],[815,236],[795,260],[790,310],[760,350],[740,390],[740,440],[780,470],[770,500],[745,520],[745,570],[720,620],[700,650],[670,645],[660,610],[640,580],[625,515],[590,530],[560,550],[530,535],[515,500],[510,440],[515,400],[535,380],[580,350],[600,330],[640,280],[650,230],[680,170],[700,145]]),
    // small northern islands
    N([[642,178],[660,160],[690,148],[693,155],[660,170]]),
    N([[675,145],[685,120],[690,140]]),
    N([[758,50],[772,43],[768,55]]),
    N([[395,430],[405,432],[393,460],[388,450]]),
    N([[345,490],[360,478],[355,495]]),
    N([[250,540],[268,505],[285,498],[270,525],[255,545]]),
    N([[790,545],[785,575],[772,580],[775,555]]),
    N([[752,570],[750,590],[738,620],[742,595]]),
    N([[785,452],[805,455],[800,463],[785,460]]),
    N([[855,490],[862,510],[845,535],[845,505]]),
    N([[605,645],[620,650],[615,665],[603,660]]),
    N([[630,640],[655,625],[660,650],[640,672]]),
    // mediterranean
    S([[555,437],[562,470],[550,495],[538,470]]),
    S([[530,515],[565,503],[570,560],[550,590],[530,585],[525,550]]),
    S([[645,622],[730,610],[730,645],[680,648]]),
    S([[362,550],[392,548],[380,568]]),
    S([[328,572],[338,570],[332,578]]),
    S([[403,538],[415,545],[408,547]]),
    S([[1238,640],[1290,590],[1270,640]]),
    S([[995,500],[1005,503],[1000,512]]),
    S([[1025,525],[1040,530],[1030,538]]),
    S([[985,548],[992,550],[988,555]]),
    S([[1045,575],[1065,578],[1050,582]]),
    S([[1015,610],[1028,612],[1018,622]]),
    S([[1010,628],[1025,626],[1015,633]]),
    S([[985,598],[995,615],[985,620]]),
    S([[1095,625],[1105,620],[1105,637],[1097,637]]),
    S([[880,590],[888,595],[882,600]]),
    S([[882,607],[892,610],[886,615]]),
    S([[995,630],[1005,630],[1000,635]]),
    // turkey
    S([[1025,505],[1060,475],[1095,470],[1100,435],[1150,420],[1190,370],[1240,355],[1290,365],[1350,350],[1400,320],[1440,285],[1470,300],[1510,325],[1500,345],[1530,390],[1552,412],[1520,440],[1450,490],[1350,530],[1340,570],[1320,560],[1250,560],[1200,590],[1140,620],[1100,600],[1060,580],[1040,540]])
];

// [x0, y0, x1, y1, cell size], first match wins
const density = [
    [448, 400, 565, 510, 9],
    [400, 400, 450, 446, 6],
    [388, 330, 450, 400, 11],
    [355, 370, 400, 420, 12],
    [470, 170, 640, 300, 30],
    [470, 300, 640, 365, 15],
    [560, 365, 640, 400, 13],
    [560, 400, 625, 470, 14],
    [315, 510, 420, 620, 17],
    [385, 445, 490, 550, 14],
    [500, 510, 600, 620, 10],
    [590, 470, 690, 630, 13],
    [670, 490, 860, 620, 18]
];

function rnd(a, b, c) {
    const v = Math.sin(a * 12.9898 + b * 78.233 + c * 37.719) * 43758.5453;
    return v - Math.floor(v);
}

function sizeAt(x, y) {
    // cells shrink towards the middle of germany, along a tilted ellipse
    const dx = x - 505, dy = y - 455;
    const u = dx * 0.85 + dy * 0.53, v = dy * 0.85 - dx * 0.53;
    const r = Math.hypot(u / 68, v / 42);
    if (r < 1) return 2.8 + 6 * r;
    for (const d of density) {
        if (x >= d[0] && x < d[2] && y >= d[1] && y < d[3]) return d[4];
    }
    return 16;
}

const seeds = [];

function split(x, y, s) {
    const target = sizeAt(x + s / 2, y + s / 2);
    if (s > 2.5 && s > target * (0.75 + 0.6 * rnd(x, y, s))) {
        const h = s / 2;
        split(x, y, h);
        split(x + h, y, h);
        split(x, y + h, h);
        split(x + h, y + h, h);
    } else {
        seeds.push([
            x + s / 2 + (rnd(x, y, 1) - 0.5) * s * 0.7,
            y + s / 2 + (rnd(x, y, 2) - 0.5) * s * 0.7
        ]);
    }
}

for (let x = 320; x < 880; x += 40) {
    for (let y = 160; y < 640; y += 40) {
        split(x, y, 40);
    }
}

// keep the side of the bisector of a and b that is nearer to a
function clip(poly, a, b) {
    const mx = (a[0] + b[0]) / 2, my = (a[1] + b[1]) / 2;
    const nx = b[0] - a[0], ny = b[1] - a[1];
    const side = p => (p[0] - mx) * nx + (p[1] - my) * ny;
    const out = [];
    poly.forEach((p, i) => {
        const q = poly[(i + 1) % poly.length];
        const sp = side(p), sq = side(q);
        if (sp <= 0) out.push(p);
        if ((sp < 0 && sq > 0) || (sp > 0 && sq < 0)) {
            const t = sp / (sp - sq);
            out.push([p[0] + (q[0] - p[0]) * t, p[1] + (q[1] - p[1]) * t]);
        }
    });
    return out;
}

function voronoiCell(a) {
    const near = seeds
        .map(b => [Math.hypot(b[0] - a[0], b[1] - a[1]), b])
        .filter(n => n[0] > 0 && n[0] < 120)
        .sort((x, y) => x[0] - y[0]);
    let poly = [[a[0] - 70, a[1] - 70], [a[0] + 70, a[1] - 70], [a[0] + 70, a[1] + 70], [a[0] - 70, a[1] + 70]];
    let reach = 100;
    for (const n of near) {
        if (n[0] > reach * 2) break;
        poly = clip(poly, a, n[1]);
        reach = Math.max(...poly.map(p => Math.hypot(p[0] - a[0], p[1] - a[1])));
    }
    return poly;
}

// both cells on an edge get the same bend, hashed from its rounded midpoint
function wobblyCell(poly) {
    let d = '';
    poly.forEach((p, i) => {
        const q = poly[(i + 1) % poly.length];
        d += (i ? 'L' : 'M') + p[0].toFixed(1) + ' ' + p[1].toFixed(1);
        const len = Math.hypot(q[0] - p[0], q[1] - p[1]);
        if (len > 6) {
            const mx = Math.round((p[0] + q[0]) * 2) / 4, my = Math.round((p[1] + q[1]) * 2) / 4;
            const amp = Math.min(len * 0.12, 2.5);
            d += 'L' + (mx + (rnd(mx, my, 5) - 0.5) * 2 * amp).toFixed(1) + ' ' + (my + (rnd(mx, my, 6) - 0.5) * 2 * amp).toFixed(1);
        }
    });
    return d + 'Z';
}

const regionPath = seeds.map(s => wobblyCell(voronoiCell(s))).join('');

// break long straight coast edges into small ragged steps
function rough(points) {
    const out = [];
    points.forEach((p, i) => {
        const q = points[(i + 1) % points.length];
        const len = Math.hypot(q[0] - p[0], q[1] - p[1]);
        const steps = Math.max(1, Math.floor(len / 5));
        for (let k = 0; k < steps; k++) {
            const t = k / steps;
            const wob = k === 0 ? 0 : 1.1;
            out.push([
                p[0] + (q[0] - p[0]) * t + (rnd(i, k, 3) - 0.5) * wob,
                p[1] + (q[1] - p[1]) * t + (rnd(i, k, 4) - 0.5) * wob
            ]);
        }
    });
    return out;
}

function toPath(poly) {
    const pts = poly.length > 5 ? rough(poly) : poly;
    return 'M' + pts.map(p => p[0].toFixed(1) + ' ' + p[1].toFixed(1)).join('L') + 'Z';
}

const landPath = land.map(toPath).join('');
const wholePath = landPath + toPath(iceland);

const picked = S([[320,428],[328,408],[342,400],[345,385],[363,403],[348,415],[335,420]]);

document.getElementById('land-clip').setAttribute('d', landPath);
document.getElementById('land-fill').setAttribute('d', wholePath);
document.getElementById('land-edge').setAttribute('d', wholePath);
document.getElementById('regions').setAttribute('d', regionPath);
document.getElementById('selected').setAttribute('d', 'M' + picked.map(p => p.join(' ')).join('L') + 'Z');
```
